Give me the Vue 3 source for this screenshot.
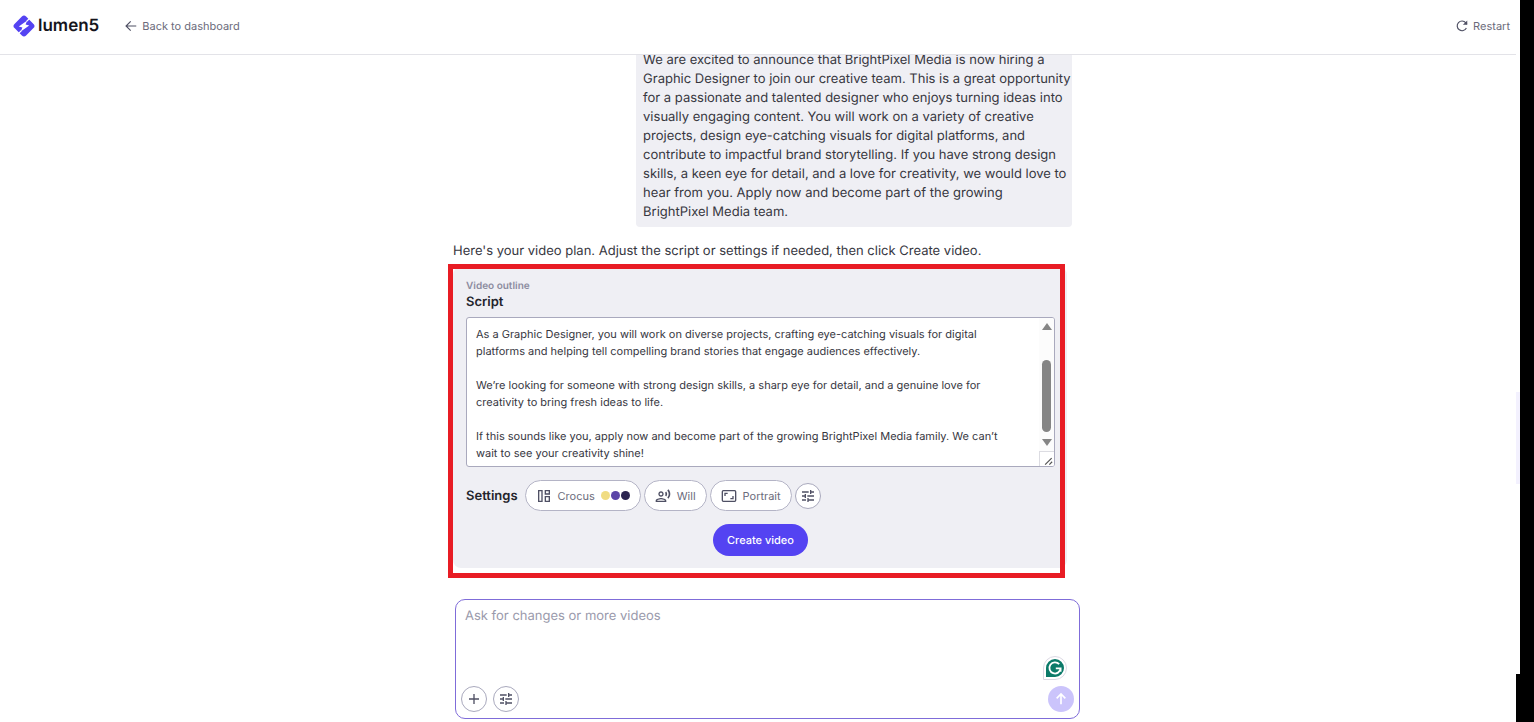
<template>
  <div class="screen">
    <div class="page">
      <header class="topbar">
        <a href="#" class="brand" aria-label="lumen5">
          <svg class="brand-mark" viewBox="0 0 24 24" aria-hidden="true">
            <rect x="3.8" y="3.8" width="16.4" height="16.4" rx="3" transform="rotate(45 12 12)" fill="#5443f2" />
            <path d="M15.2 6.5L13.6 10.6L17.2 11.6L8.8 17.5L10.4 13.4L6.8 12.4Z" fill="#fff" />
            <path d="M14.6 7.4l3.6-3.6M9.4 16.6l-3.6 3.6" stroke="#fff" stroke-width="1.3" />
          </svg>
          <span class="brand-name">lumen5</span>
        </a>
        <a href="#" class="nav-link">
          <svg class="icon-sm" viewBox="0 0 24 24" aria-hidden="true">
            <path d="M21 12H4M11.5 4L3.5 12l8 8" class="stroke" />
          </svg>
          Back to dashboard
        </a>
        <button type="button" class="nav-link restart" @click="restart">
          <svg class="icon-sm" viewBox="0 0 24 24" aria-hidden="true">
            <path d="M19.5 15.5A8.3 8.3 0 1 1 18.5 6.5L20.5 9" class="stroke" />
            <path d="M21 2.5V10h-7.5z" class="fill" />
          </svg>
          Restart
        </button>
      </header>

      <main class="thread">
        <div class="column">
          <p class="user-message">{{ brief }}</p>
          <p class="reply">Here's your video plan. Adjust the script or settings if needed, then click Create video.</p>

          <section class="plan">
            <p class="plan-label">Video outline</p>
            <label class="plan-title" for="script">Script</label>
            <div class="script-box">
              <textarea id="script" v-model="script" class="script-input" spellcheck="false"></textarea>
              <div class="scrollbar" aria-hidden="true">
                <span class="arrow-up"></span>
                <span class="thumb"></span>
                <span class="arrow-down"></span>
                <svg class="grip" viewBox="0 0 15 15">
                  <path d="M5.5 13.5l7-7M10 13.5l3-3" stroke="#555" stroke-width="1.3" />
                </svg>
              </div>
            </div>

            <div class="settings">
              <span class="settings-title">Settings</span>
              <button type="button" class="chip">
                <svg class="icon" viewBox="0 0 24 24" aria-hidden="true">
                  <path d="M4 4h5v16H4zM14 4h6v5h-6zM14 13h6v7h-6z" class="stroke" />
                </svg>
                Crocus
                <span class="swatches">
                  <i v-for="color in palette" :key="color" class="dot" :style="{ background: color }"></i>
                </span>
              </button>
              <button type="button" class="chip">
                <svg class="icon" viewBox="0 0 24 24" aria-hidden="true">
                  <path :d="voiceIcon" class="fill" />
                </svg>
                Will
              </button>
              <button type="button" class="chip">
                <svg class="icon" viewBox="0 0 24 24" aria-hidden="true">
                  <rect x="2" y="4" width="20" height="16" rx="1.5" class="stroke" />
                  <path d="M6 12V8h4M18 12v4h-4" class="stroke" />
                </svg>
                Portrait
              </button>
              <button type="button" class="round" aria-label="More settings">
                <svg class="icon" viewBox="0 0 24 24" aria-hidden="true">
                  <path :d="tuneIcon" class="fill" />
                </svg>
              </button>
            </div>

            <button type="button" class="create">Create video</button>
            <div class="highlight"></div>
          </section>
        </div>
      </main>

      <footer class="dock">
        <form class="composer" @submit.prevent>
          <textarea v-model="prompt" class="prompt" placeholder="Ask for changes or more videos" aria-label="Ask for changes or more videos"></textarea>
          <div class="tools">
            <button type="button" class="round" aria-label="Add">
              <svg class="icon" viewBox="0 0 24 24" aria-hidden="true">
                <path d="M12 4.5v15M4.5 12h15" class="stroke" />
              </svg>
            </button>
            <button type="button" class="round" aria-label="Options">
              <svg class="icon" viewBox="0 0 24 24" aria-hidden="true">
                <path :d="tuneIcon" class="fill" />
              </svg>
            </button>
            <button type="submit" class="send" aria-label="Send">
              <svg class="icon" viewBox="0 0 24 24" aria-hidden="true">
                <path d="M12 20V5M5.5 11l6.5-6.5 6.5 6.5" stroke="#fff" stroke-width="2.5" fill="none" />
              </svg>
            </button>
          </div>
          <svg class="assistant" viewBox="0 0 24 24" aria-hidden="true">
            <path d="M12 .5A11.5 11.5 0 1 1 12 23.5H.5V12A11.5 11.5 0 0 1 12 .5z" fill="#fff" stroke="#dcd9e4" />
            <path d="M12 3A9 9 0 1 1 12 21H3V12A9 9 0 0 1 12 3z" fill="#0b7a69" />
            <path d="M16.2 8.2A5.6 5.6 0 1 0 17.6 12.4H12.8M17.6 12.4v3.4" fill="none" stroke="#fff" stroke-width="1.8" />
          </svg>
        </form>
      </footer>
    </div>
    <div class="edge"></div>
  </div>
</template>

<script setup>
import { ref } from 'vue';

const brief = 'We are excited to announce that BrightPixel Media is now hiring a Graphic Designer to join our creative team. This is a great opportunity for a passionate and talented designer who enjoys turning ideas into visually engaging content. You will work on a variety of creative projects, design eye-catching visuals for digital platforms, and contribute to impactful brand storytelling. If you have strong design skills, a keen eye for detail, and a love for creativity, we would love to hear from you. Apply now and become part of the growing BrightPixel Media team.';

const initialScript = [
  'As a Graphic Designer, you will work on diverse projects, crafting eye-catching visuals for digital platforms and helping tell compelling brand stories that engage audiences effectively.',
  'We’re looking for someone with strong design skills, a sharp eye for detail, and a genuine love for creativity to bring fresh ideas to life.',
  'If this sounds like you, apply now and become part of the growing BrightPixel Media family. We can’t wait to see your creativity shine!'
].join('\n\n');

const script = ref(initialScript);
const prompt = ref('');
const palette = ['#f0dc82', '#5b45a8', '#2b2450'];

const tuneIcon = 'M3 17v2h6v-2H3zM3 5v2h10V5H3zm10 16v-2h8v-2h-8v-2h-2v6h2zM7 9v2H3v2h4v2h2V9H7zm14 4v-2H11v2h10zm-6-4h2V7h4V5h-4V3h-2v6z';
const voiceIcon = 'M9 13c2.21 0 4-1.79 4-4s-1.79-4-4-4-4 1.79-4 4 1.79 4 4 4zm0-6c1.1 0 2 .9 2 2s-.9 2-2 2-2-.9-2-2 .9-2 2-2zm0 8c-2.67 0-8 1.34-8 4v2h16v-2c0-2.66-5.33-4-8-4zm-6 4c.22-.72 3.31-2 6-2 2.7 0 5.8 1.29 6 2H3zM15.08 7.05c.84 1.18.84 2.71 0 3.89l1.68 1.69c2.02-2.02 2.02-5.07 0-7.27l-1.68 1.69zM20.07 2l-1.63 1.63c2.77 3.02 2.77 7.56 0 10.74L20.07 16c3.9-3.89 3.91-9.95 0-14z';

const restart = () => {
  script.value = initialScript;
  prompt.value = '';
};
</script>

<style>
body {
  margin: 0;
  background: #fff;
}
</style>

<style scoped>
* {
  box-sizing: border-box;
}

.screen {
  display: flex;
  height: 100vh;
  font-family: Inter, "Liberation Sans", sans-serif;
  font-size: 13px;
  text-rendering: geometricPrecision;
  color: #37373f;
  background: #fff;
}

button,
textarea {
  font-family: inherit;
  text-rendering: inherit;
  margin: 0;
}

button {
  cursor: pointer;
}

p {
  margin: 0;
}

.page {
  flex: 1;
  min-width: 0;
  display: flex;
  flex-direction: column;
}

.edge {
  position: relative;
  width: 14px;
  background: #000;
}

.edge::before,
.edge::after {
  content: '';
  position: absolute;
  right: 100%;
  width: 4px;
}

.edge::before {
  top: 392px;
  height: 92px;
  background: #f3f1fe;
}

.edge::after {
  bottom: 0;
  height: 48px;
  background: #000;
}

/* Top bar */
.topbar {
  display: flex;
  align-items: center;
  flex: none;
  height: 55px;
  margin-right: 4px;
  padding: 0 6px 2px 12px;
  border-bottom: 1px solid #e3e3e8;
}

.brand {
  display: flex;
  align-items: center;
  gap: 2px;
  margin-right: 25px;
  text-decoration: none;
}

.brand-mark {
  width: 24px;
  height: 24px;
}

.brand-name {
  font-size: 17px;
  font-weight: 600;
  color: #15151c;
}

.nav-link {
  display: flex;
  align-items: center;
  gap: 4px;
  padding: 0;
  border: 0;
  background: none;
  font-size: 11px;
  color: #6b6b7b;
  text-decoration: none;
}

.restart {
  margin-left: auto;
}

.icon-sm {
  width: 14px;
  height: 14px;
  color: #4f5064;
}

.icon {
  flex: none;
  width: 16px;
  height: 16px;
  color: #4f5064;
}

.stroke {
  fill: none;
  stroke: currentColor;
  stroke-width: 2;
}

.fill {
  fill: currentColor;
}

/* Conversation */
.thread {
  flex: 1;
  min-height: 0;
  display: flex;
  flex-direction: column;
  align-items: center;
  justify-content: flex-end;
  overflow: hidden;
  padding: 0 16px 31px;
}

.column {
  display: flex;
  flex-direction: column;
  width: 100%;
  max-width: 614px;
}

.user-message {
  align-self: flex-end;
  width: 71%;
  margin-right: -5px;
  padding: 7px 1px 5px 7px;
  border-radius: 4px;
  background: #efeff4;
  line-height: 19px;
}

.reply {
  padding: 14px 0 6px;
  line-height: 20px;
}

.plan {
  position: relative;
  display: flex;
  flex-direction: column;
  padding: 11px 12px 12px 13px;
  border-radius: 8px;
  background: #efeff4;
}

.highlight {
  position: absolute;
  inset: -3px 2px -10px -5px;
  border: 5px solid #e81c24;
  pointer-events: none;
}

.plan-label {
  font-size: 10px;
  font-weight: 600;
  line-height: 16px;
  color: #8c8c9f;
}

.plan-title {
  font-weight: 600;
  line-height: 16px;
  color: #24242c;
}

.script-box {
  display: flex;
  height: 150px;
  margin: 7px 0 13px;
  border: 1px solid #a9a9bd;
  border-radius: 3px;
  background: #fff;
  overflow: hidden;
}

.script-input {
  flex: 1;
  min-width: 0;
  padding: 8px 20px 0 9px;
  border: 0;
  outline: 0;
  resize: none;
  overflow: hidden;
  background: none;
  font-size: 11px;
  line-height: 17px;
  color: #37373f;
}

.scrollbar {
  display: flex;
  flex-direction: column;
  align-items: center;
  width: 15px;
  background: #fcfcfc;
}

.arrow-up,
.arrow-down {
  border: 5px solid transparent;
}

.arrow-up {
  border-top: 0;
  border-bottom: 7px solid #858585;
  margin-top: 5px;
}

.arrow-down {
  border-bottom: 0;
  border-top: 7px solid #858585;
  margin: 7px 0 5px;
}

.thumb {
  width: 9px;
  height: 72px;
  margin-top: auto;
  border-radius: 5px;
  background: #858585;
}

.grip {
  width: 15px;
  height: 15px;
  border-top: 1px solid #dcdce2;
  border-left: 1px solid #dcdce2;
  background: #fff;
}

.settings {
  display: flex;
  align-items: center;
  gap: 3px;
}

.settings-title {
  margin-right: 4px;
  font-weight: 600;
  color: #24242c;
}

.chip {
  display: flex;
  align-items: center;
  gap: 6px;
  height: 31px;
  padding: 0 10px;
  border: 1px solid #b4b4c6;
  border-radius: 16px;
  background: #fff;
  font-size: 11px;
  color: #6b6b7b;
}

.swatches {
  display: flex;
  gap: 1px;
}

.dot {
  width: 9px;
  height: 9px;
  border-radius: 50%;
}

.round {
  display: flex;
  align-items: center;
  justify-content: center;
  width: 26px;
  height: 26px;
  padding: 0;
  border: 1px solid #a9a9bd;
  border-radius: 50%;
  background: #fff;
}

.create {
  align-self: center;
  height: 32px;
  margin-top: 13px;
  padding: 0 14px;
  border: 0;
  border-radius: 16px;
  background: #5443f2;
  font-size: 11px;
  font-weight: 500;
  color: #fff;
}

/* Prompt box */
.dock {
  display: flex;
  justify-content: center;
  flex: none;
  padding: 0 0 3px 15px;
}

.composer {
  position: relative;
  display: flex;
  flex-direction: column;
  width: 100%;
  max-width: 625px;
  height: 120px;
  padding: 6px 5px;
  border: 1px solid #7f6cd9;
  border-radius: 10px;
  background: #fff;
}

.prompt {
  flex: 1;
  min-height: 0;
  padding: 0 4px;
  border: 0;
  outline: 0;
  resize: none;
  background: none;
  font-size: 13px;
  line-height: 20px;
  color: #37373f;
}

.prompt::placeholder {
  color: #9a9aac;
  opacity: 1;
}

.tools {
  display: flex;
  gap: 6px;
}

.send {
  display: flex;
  align-items: center;
  justify-content: center;
  width: 26px;
  height: 26px;
  margin-left: auto;
  padding: 0;
  border: 0;
  border-radius: 50%;
  background: #cbc4fb;
}

.assistant {
  position: absolute;
  right: 12px;
  bottom: 38px;
  width: 24px;
  height: 24px;
}
</style>
